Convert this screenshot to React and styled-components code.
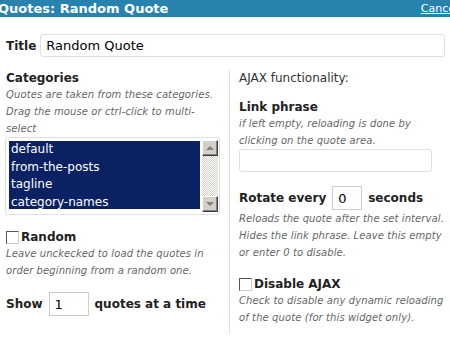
import styled, { createGlobalStyle } from 'styled-components';

const GlobalStyle = createGlobalStyle`
  html, body {
    margin: 0;
    padding: 0;
    background: #fff;
    overflow: hidden;
  }
  body {
    font-family: "DejaVu Sans", Verdana, sans-serif;
    color: #333;
  }
`;

const Panel = styled.div`
  width: 450px;
  height: 341px;
  overflow: hidden;
`;

const TitleBar = styled.div`
  height: 17px;
  display: flex;
  align-items: center;
  justify-content: space-between;
  background: #2783ae;
  color: #fff;
  overflow: hidden;
  white-space: nowrap;
`;

const BarTitle = styled.span`
  margin-left: -2px;
  font-size: 13px;
  font-weight: bold;
  line-height: 17px;
`;

const Cancel = styled.a`
  margin-right: -8px;
  font-size: 11px;
  color: #fff;
  text-decoration: underline;
  line-height: 17px;
`;

const Body = styled.div`
  padding: 17px 5px 0 6px;
`;

const TitleRow = styled.div`
  display: flex;
  align-items: center;
  gap: 4px;
`;

const Label = styled.label`
  font-size: 12px;
  font-weight: bold;
  color: #222;
  white-space: nowrap;
`;

const TextInput = styled.input`
  box-sizing: border-box;
  height: ${p => p.$h || 23}px;
  width: ${p => (p.$w ? `${p.$w}px` : 'auto')};
  flex: ${p => (p.$w ? 'none' : 1)};
  min-width: 0;
  padding: 0 5px;
  border: 1px solid ${p => (p.$square ? '#ccc' : '#dfdfdf')};
  border-radius: ${p => (p.$square ? 0 : 3)}px;
  font-family: inherit;
  font-size: 13px;
  color: #000;
  background: #fff;
  outline: none;
`;

const Columns = styled.div`
  display: grid;
  grid-template-columns: 223px 1fr;
  margin-top: 13px;
  height: 264px;
`;

const LeftCol = styled.div`
  padding-right: 9px;
`;

const RightCol = styled.div`
  border-left: 1px solid #ddd;
  padding-left: 9px;
`;

const Heading = styled.div`
  font-size: 12px;
  font-weight: bold;
  color: #222;
  line-height: 16px;
  margin-top: ${p => p.$mt || 0}px;
`;

const Plain = styled.div`
  font-size: 12px;
  line-height: 16px;
`;

const Help = styled.div`
  font-size: 10px;
  font-style: italic;
  color: #666;
  line-height: 17px;
  letter-spacing: 0.1px;
`;

const ListBox = styled.div`
  display: flex;
  height: 78px;
  box-sizing: border-box;
  border: 1px solid #dfdfdf;
  border-radius: 3px;
  margin-left: -1px;
  padding: 2px 1px 2px 3px;
`;

const Options = styled.div`
  flex: 1;
  margin-top: 1px;
  height: 68px;
  background: #0a2263;
`;

const Option = styled.div`
  color: #fff;
  font-size: 12px;
  line-height: 17.5px;
  padding-left: 2px;
  white-space: nowrap;
`;

const ScrollBar = styled.div`
  width: 16px;
  margin-left: 2px;
  display: flex;
  flex-direction: column;
  background-color: #eee;
  background-image: repeating-conic-gradient(#d4d0c8 0 25%, #fff 0 50%);
  background-size: 2px 2px;
`;

const ScrollButton = styled.div`
  height: 16px;
  box-sizing: border-box;
  background: #d4d0c8;
  border: 1px solid;
  border-color: #fff #404040 #404040 #fff;
  box-shadow: inset -1px -1px 0 #808080;
  display: flex;
  align-items: center;
  justify-content: center;
  margin-top: ${p => (p.$down ? 'auto' : 0)};
`;

const Arrow = styled.span`
  width: 0;
  height: 0;
  border-left: 4px solid transparent;
  border-right: 4px solid transparent;
  ${p => (p.$down ? 'border-top: 4px solid #808080;' : 'border-bottom: 4px solid #808080;')}
`;

const CheckRow = styled.div`
  display: flex;
  align-items: center;
  gap: 2px;
  margin-top: ${p => p.$mt || 0}px;
  font-size: 12px;
  font-weight: bold;
  color: #222;
  line-height: 16px;
`;

const Box = styled.span`
  width: 11px;
  height: 11px;
  border: 1px solid #555;
  border-right-color: #ccc;
  border-bottom-color: #ccc;
  background: #fff;
`;

const InlineRow = styled.div`
  display: flex;
  align-items: center;
  gap: ${p => p.$gap || 6}px;
  margin-top: ${p => p.$mt || 0}px;
`;

export default function App() {
  const cats = ['default', 'from-the-posts', 'tagline', 'category-names'];
  return (
    <Panel>
      <GlobalStyle />
      <TitleBar>
        <BarTitle>Quotes: Random Quote</BarTitle>
        <Cancel href="#">Cancel</Cancel>
      </TitleBar>
      <Body>
        <TitleRow>
          <Label>Title</Label>
          <TextInput $h={23} defaultValue="Random Quote" />
        </TitleRow>
        <Columns>
          <LeftCol>
            <Heading>Categories</Heading>
            <Help>
              Quotes are taken from these categories. Drag the mouse or ctrl-click to multi-select
            </Help>
            <ListBox>
              <Options>
                {cats.map(c => (
                  <Option key={c}>{c}</Option>
                ))}
              </Options>
              <ScrollBar>
                <ScrollButton><Arrow /></ScrollButton>
                <ScrollButton $down><Arrow $down /></ScrollButton>
              </ScrollBar>
            </ListBox>
            <CheckRow $mt={14}>
              <Box />
              Random
            </CheckRow>
            <Help>Leave unckecked to load the quotes in order beginning from a random one.</Help>
            <InlineRow $mt={13}>
              <Label>Show</Label>
              <TextInput $w={40} $h={24} $square defaultValue="1" />
              <Label>quotes at a time</Label>
            </InlineRow>
          </LeftCol>
          <RightCol>
            <Plain>AJAX functionality:</Plain>
            <Heading $mt={13}>Link phrase</Heading>
            <Help>if left empty, reloading is done by clicking on the quote area.</Help>
            <TextInput $w={193} $h={23} style={{ display: 'block' }} />
            <InlineRow $mt={14}>
              <Label>Rotate every</Label>
              <TextInput $w={30} $h={24} $square defaultValue="0" />
              <Label>seconds</Label>
            </InlineRow>
            <Help>
              Reloads the quote after the set interval. Hides the link phrase. Leave this empty or enter 0 to disable.
            </Help>
            <CheckRow $mt={15}>
              <Box />
              Disable AJAX
            </CheckRow>
            <Help>Check to disable any dynamic reloading of the quote (for this widget only).</Help>
          </RightCol>
        </Columns>
      </Body>
    </Panel>
  );
}
